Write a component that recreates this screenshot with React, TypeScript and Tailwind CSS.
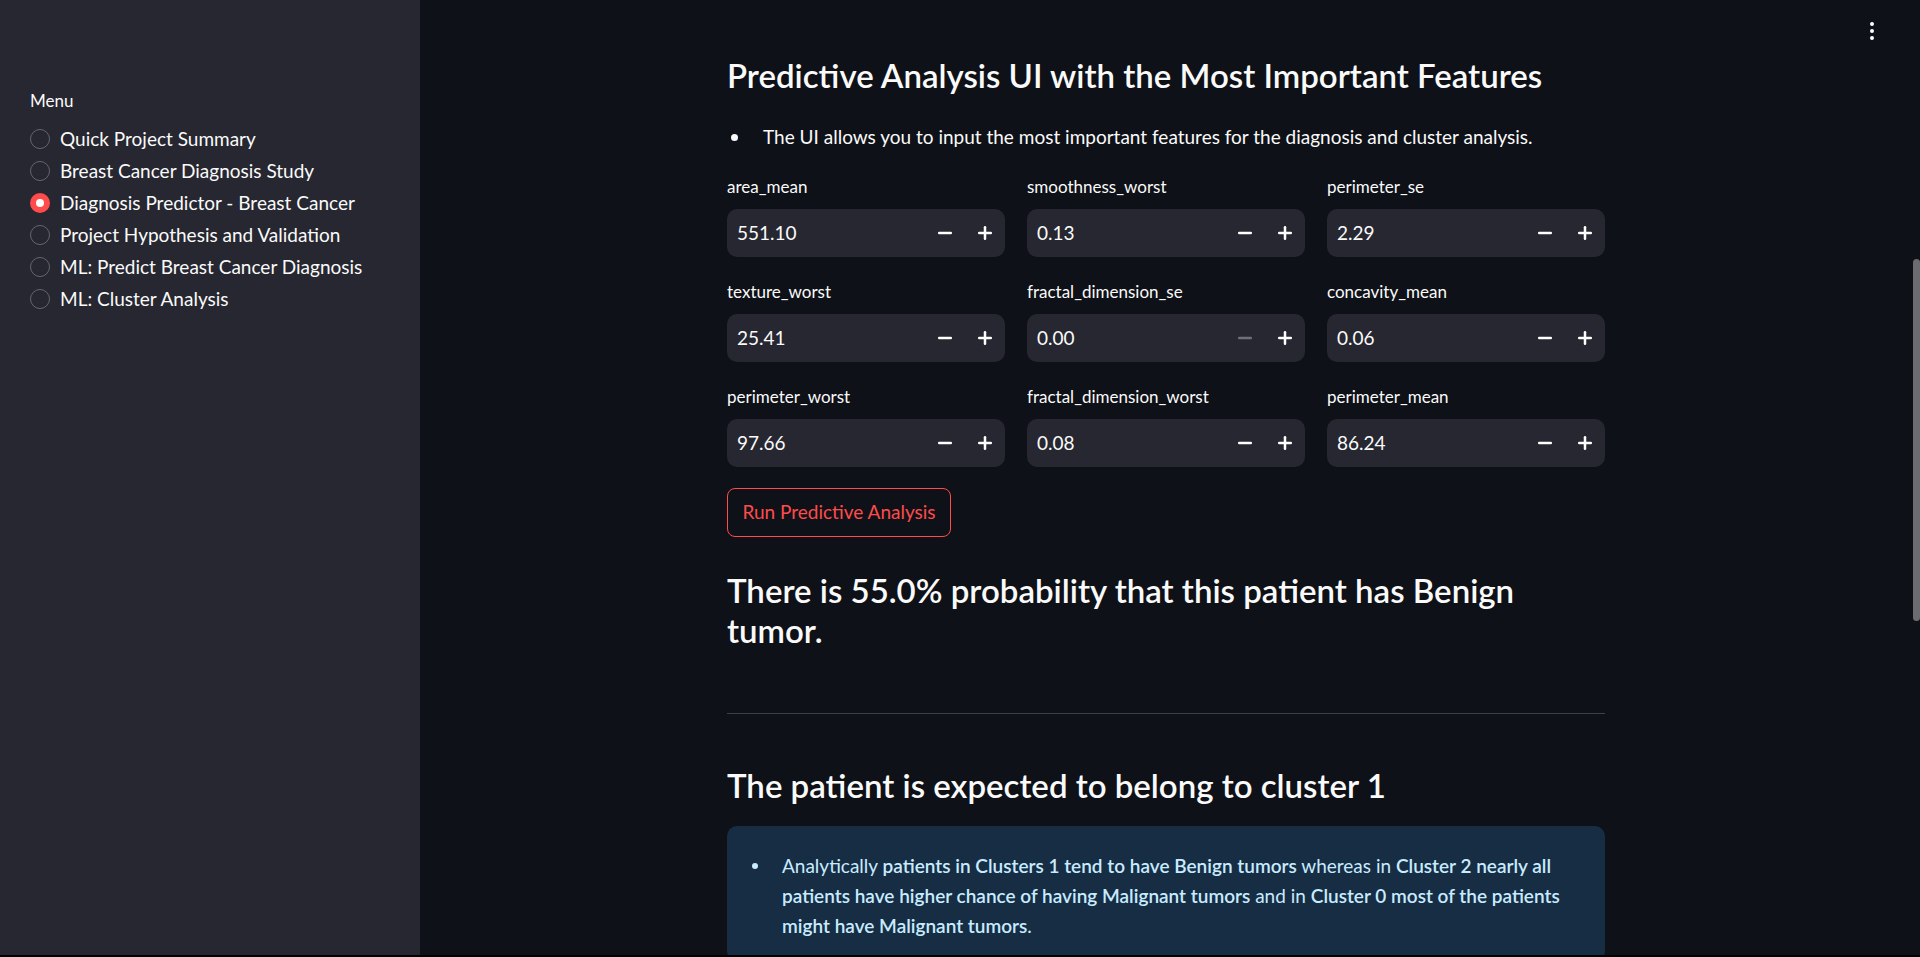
import React from 'react';
import { Minus, Plus, EllipsisVertical } from 'lucide-react';

const menuItems = [
  'Quick Project Summary',
  'Breast Cancer Diagnosis Study',
  'Diagnosis Predictor - Breast Cancer',
  'Project Hypothesis and Validation',
  'ML: Predict Breast Cancer Diagnosis',
  'ML: Cluster Analysis',
];

const fields = [
  { label: 'area_mean', value: '551.10' },
  { label: 'smoothness_worst', value: '0.13' },
  { label: 'perimeter_se', value: '2.29' },
  { label: 'texture_worst', value: '25.41' },
  { label: 'fractal_dimension_se', value: '0.00', minDisabled: true },
  { label: 'concavity_mean', value: '0.06' },
  { label: 'perimeter_worst', value: '97.66' },
  { label: 'fractal_dimension_worst', value: '0.08' },
  { label: 'perimeter_mean', value: '86.24' },
];

function NumberInput({ label, value, minDisabled }: { label: string; value: string; minDisabled?: boolean }) {
  return (
    <div>
      <div className="text-[17px] leading-[22px] mb-[11px] text-[#fafafa]">{label}</div>
      <div className="h-[48px] bg-[#262730] rounded-[10px] flex items-center">
        <span className="flex-1 pl-[10px] text-[19px] text-[#fafafa]">{value}</span>
        <button className={`w-[40px] h-full flex items-center justify-center ${minDisabled ? 'text-[#6f7077]' : 'text-white'}`}>
          <Minus size={20} strokeWidth={3} />
        </button>
        <button className="w-[40px] h-full flex items-center justify-center text-white">
          <Plus size={20} strokeWidth={3} />
        </button>
      </div>
    </div>
  );
}

export default function App() {
  const active = 2;

  return (
    <div className="relative w-[1920px] h-[957px] bg-black overflow-hidden font-[Lato,sans-serif] text-[#fafafa]">
      <div className="flex h-[955px]">

        {/* Sidebar */}
        <aside className="w-[420px] shrink-0 bg-[#262730] pl-[30px] pt-[90px]">
          <div className="text-[17px] leading-[22px] mb-[11px]">Menu</div>
          <div className="flex flex-col">
            {menuItems.map((item, i) => (
              <div key={item} className="h-[32px] flex items-center gap-[10px]">
                {i === active ? (
                  <span className="w-[20px] h-[20px] rounded-full bg-[#ff4b4b] flex items-center justify-center">
                    <span className="w-[8px] h-[8px] rounded-full bg-white" />
                  </span>
                ) : (
                  <span className="w-[20px] h-[20px] rounded-full border border-[#65666d]" />
                )}
                <span className="text-[19px] leading-[24px]">{item}</span>
              </div>
            ))}
          </div>
        </aside>

        {/* Main */}
        <main className="flex-1 bg-[#0e1117] overflow-hidden">
          <div className="w-[878px] mx-auto pt-[55px]">
            <h3 className="text-[33px] leading-[40px] font-semibold">Predictive Analysis UI with the Most Important Features</h3>

            <div className="mt-[26px] flex items-center h-[32px]">
              <span className="w-[7px] h-[7px] rounded-full bg-[#fafafa] ml-[4px]" />
              <span className="ml-[25px] text-[19px] leading-[32px]">The UI allows you to input the most important features for the diagnosis and cluster analysis.</span>
            </div>

            <div className="mt-[23px] grid grid-cols-3 gap-x-[22px] gap-y-[24px]">
              {fields.map((f) => (
                <NumberInput key={f.label} label={f.label} value={f.value} minDisabled={f.minDisabled} />
              ))}
            </div>

            <button className="mt-[21px] h-[49px] w-[224px] rounded-[8px] border border-[#ff4b4b] text-[#ff4b4b] text-[19px] flex items-center justify-center">
              Run Predictive Analysis
            </button>

            <h3 className="mt-[33px] text-[33px] leading-[40px] font-semibold">
              There is 55.0% probability that this patient has Benign<br />tumor.
            </h3>

            <hr className="mt-[63px] border-0 h-px bg-[#3d4044]" />

            <h3 className="mt-[51px] text-[33px] leading-[40px] font-semibold">The patient is expected to belong to cluster 1</h3>

            <div className="mt-[21px] rounded-[10px] bg-[#172d43] pt-[25px] pb-[20px] pr-[16px] pl-[25px] flex items-start">
              <span className="w-[6px] h-[6px] rounded-full bg-[#c7ebff] mt-[12px] shrink-0" />
              <p className="ml-[24px] text-[19px] leading-[30px] text-[#c7ebff]">
                Analytically <b className="font-semibold">patients in Clusters 1 tend to have Benign tumors</b> whereas in <b className="font-semibold">Cluster 2 nearly all patients have higher chance of having Malignant tumors</b> and in <b className="font-semibold">Cluster 0 most of the patients might have Malignant tumors</b>.
              </p>
            </div>
          </div>
        </main>

        {/* Scrollbar */}
        <div className="w-[8px] shrink-0 bg-[#0e1117]">
          <div className="ml-[1px] mt-[259px] w-[7px] h-[362px] rounded-full bg-[#6b6c70]" />
        </div>
      </div>

      <button className="absolute top-[19px] right-[36px] text-white">
        <EllipsisVertical size={24} strokeWidth={2} />
      </button>
    </div>
  );
}
